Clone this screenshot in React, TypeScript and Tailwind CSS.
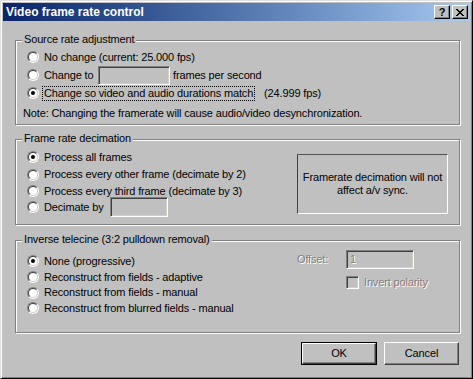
import React from "react";

function Radio({ checked }: { checked?: boolean }) {
  return (
    <span className="relative inline-block w-[12px] h-[12px] shrink-0 rounded-full border border-t-[#808080] border-l-[#808080] border-r-white border-b-white">
      <span className="absolute inset-0 flex items-center justify-center rounded-full border border-t-[#404040] border-l-[#404040] border-r-[#d4d0c8] border-b-[#d4d0c8] bg-white">
        {checked && <span className="block w-[4px] h-[4px] rounded-full bg-black" />}
      </span>
    </span>
  );
}

function Sunken({ className, children }: { className?: string; children?: React.ReactNode }) {
  return (
    <div
      className={
        "shrink-0 bg-[#c0c0c0] border border-t-[#808080] border-l-[#808080] border-r-white border-b-white shadow-[inset_1px_1px_0_#404040,inset_-1px_-1px_0_#d4d0c8] " +
        (className ?? "")
      }
    >
      {children}
    </div>
  );
}

function Group({
  label,
  className,
  children,
}: {
  label: string;
  className?: string;
  children?: React.ReactNode;
}) {
  return (
    <div
      className={
        "relative w-[445px] border border-[#808080] shadow-[inset_1px_1px_0_#fff,1px_1px_0_#fff] " +
        (className ?? "")
      }
    >
      <span className="absolute left-[6px] top-[-8px] h-[13px] bg-[#c0c0c0] px-[2px] leading-[13px] whitespace-nowrap">
        {label}
      </span>
      {children}
    </div>
  );
}

function RadioRow({
  checked,
  h,
  children,
}: {
  checked?: boolean;
  h: string;
  children: React.ReactNode;
}) {
  return (
    <div className={"flex items-center whitespace-nowrap " + h}>
      <Radio checked={checked} />
      <span className="ml-[5px] flex items-center">{children}</span>
    </div>
  );
}

const disabledText = "text-[#808080] [text-shadow:1px_1px_0_#fff]";

export default function App() {
  return (
    <div className="w-[473px] h-[379px] bg-[#c0c0c0] border border-t-[#dfdfdf] border-l-[#dfdfdf] border-r-black border-b-black shadow-[inset_1px_1px_0_#fff,inset_-1px_-1px_0_#808080] p-[2px] font-['Liberation_Sans',Arial,sans-serif] text-[11px] leading-[13px] tracking-[-0.15px] text-black">
      {/* Title bar */}
      <div className="flex h-[18px] items-center justify-between bg-gradient-to-r from-[#0a246a] to-[#a6caf0] pl-[3px] pr-[2px]">
        <span className="text-[12px] font-bold tracking-normal text-white">Video frame rate control</span>
        <div className="flex">
          <div className="flex h-[14px] w-[16px] items-center justify-center border border-t-white border-l-white border-r-black border-b-black bg-[#c0c0c0] shadow-[inset_-1px_-1px_0_#808080] text-[11px] font-bold leading-none">
            ?
          </div>
          <div className="ml-[2px] flex h-[14px] w-[16px] items-center justify-center border border-t-white border-l-white border-r-black border-b-black bg-[#c0c0c0] shadow-[inset_-1px_-1px_0_#808080]">
            <svg width="8" height="7" viewBox="0 0 8 7" shapeRendering="crispEdges">
              <path
                d="M0 0h2v1h-2zM6 0h2v1h-2zM1 1h2v1h-2zM5 1h2v1h-2zM2 2h4v1h-4zM3 3h2v1h-2zM2 4h4v1h-4zM1 5h2v1h-2zM5 5h2v1h-2zM0 6h2v1h-2zM6 6h2v1h-2z"
                fill="#000"
              />
            </svg>
          </div>
        </div>
      </div>

      {/* Body */}
      <div className="pl-[12px] pt-[19px]">
        {/* Group 1 */}
        <Group label="Source rate adjustment" className="h-[85px]">
          <div className="pl-[11px] pt-[7px]">
            <RadioRow h="h-[18px]">No change (current: 25.000 fps)</RadioRow>
            <RadioRow h="h-[18px]">
              <span className="w-[54px]">Change to</span>
              <Sunken className="w-[72px] h-[19px]" />
              <span className="ml-[3px]">frames per second</span>
            </RadioRow>
            <RadioRow checked h="h-[18px]">
              <span className="ml-[-2px] border border-dotted border-black px-[1px] leading-[13px]">
                Change so video and audio durations match
              </span>
              <span className="ml-[9px]">(24.999 fps)</span>
            </RadioRow>
          </div>
          <div className="mt-[2px] flex h-[18px] items-center pl-[7px] whitespace-nowrap">
            Note: Changing the framerate will cause audio/video desynchronization.
          </div>
        </Group>

        {/* Group 2 */}
        <Group label="Frame rate decimation" className="mt-[14px] h-[86px]">
          <div className="flex">
            <div className="w-[281px] pl-[11px] pt-[8px]">
              <RadioRow checked h="h-[18px]">Process all frames</RadioRow>
              <RadioRow h="h-[17px]">Process every other frame (decimate by 2)</RadioRow>
              <RadioRow h="h-[16px]">Process every third frame (decimate by 3)</RadioRow>
              <RadioRow h="h-[16px]">
                <span>Decimate by</span>
                <Sunken className="ml-[7px] w-[58px] h-[20px]" />
              </RadioRow>
            </div>
            <div className="mt-[14px] flex h-[60px] w-[151px] items-center justify-center border border-t-[#505050] border-l-[#404040] border-r-white border-b-white text-center">
              Framerate decimation will not
              <br />
              affect a/v sync.
            </div>
          </div>
        </Group>

        {/* Group 3 */}
        <Group label="Inverse telecine (3:2 pulldown removal)" className="mt-[15px] h-[93px]">
          <div className="flex">
            <div className="w-[281px] pl-[11px] pt-[12px]">
              <RadioRow checked h="h-[16px]">None (progressive)</RadioRow>
              <RadioRow h="h-[16px]">Reconstruct from fields - adaptive</RadioRow>
              <RadioRow h="h-[15px]">Reconstruct from fields - manual</RadioRow>
              <RadioRow h="h-[16px]">Reconstruct from blurred fields - manual</RadioRow>
            </div>
            <div className="pt-[9px]">
              <div className="flex h-[19px] items-center">
                <span className={"w-[49px] " + disabledText}>Offset:</span>
                <Sunken className="flex w-[68px] h-[19px] items-center pl-[3px]">
                  <span className={disabledText}>1</span>
                </Sunken>
              </div>
              <div className="mt-[7px] flex h-[13px] items-center pl-[49px]">
                <Sunken className="w-[13px] h-[13px]" />
                <span className={"ml-[5px] whitespace-nowrap " + disabledText}>Invert polarity</span>
              </div>
            </div>
          </div>
        </Group>

        {/* Buttons */}
        <div className="mt-[9px] flex w-[445px] justify-end gap-[7px] pr-[1px]">
          <div className="h-[23px] w-[76px] border border-black">
            <div className="flex h-full w-full items-center justify-center border border-t-white border-l-white border-r-[#404040] border-b-[#404040] shadow-[inset_-1px_-1px_0_#808080]">
              OK
            </div>
          </div>
          <div className="flex h-[23px] w-[75px] items-center justify-center border border-t-white border-l-white border-r-[#404040] border-b-[#404040] shadow-[inset_-1px_-1px_0_#808080]">
            Cancel
          </div>
        </div>
      </div>
    </div>
  );
}
